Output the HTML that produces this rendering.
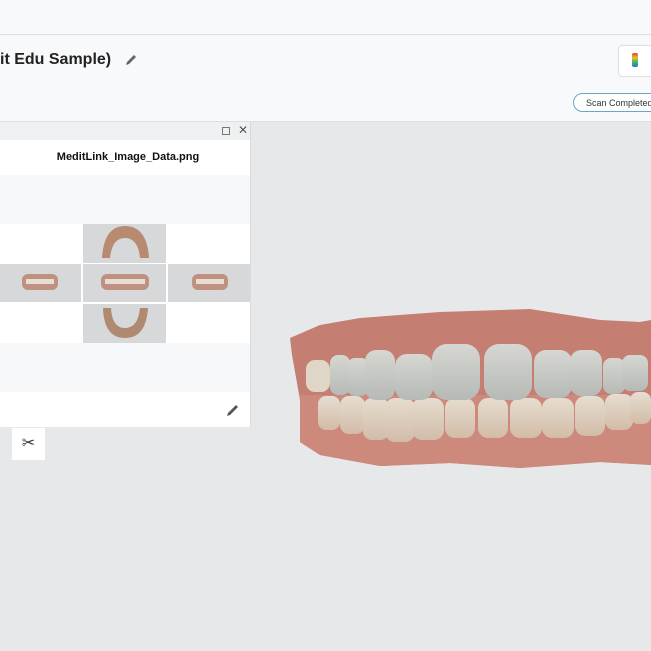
<!DOCTYPE html>
<html><head><style>
body{margin:0;width:651px;height:651px;overflow:hidden;background:#e6e8ea;font-family:"Liberation Sans",sans-serif;position:relative}
.a{position:absolute}
</style></head><body>
<div class="a" style="left:0;top:0;width:651px;height:34px;background:#f8f9fa;border-bottom:1px solid #dcdfe2"></div>
<div class="a" style="left:0;top:35px;width:651px;height:86px;background:#f8f9fa;border-bottom:1px solid #dcdfe2"></div>
<div class="a" style="left:0;top:51px;font-size:16px;font-weight:bold;color:#222">it Edu Sample)</div>
<svg class="a" style="left:124px;top:53px" width="14" height="14" viewBox="0 0 14 14"><path d="M2 12 L3 9 L10 2 L12 4 L5 11 Z" fill="#666"/></svg>
<div class="a" style="left:618px;top:45px;width:40px;height:30px;background:#fff;border:1px solid #dde0e3;border-radius:4px"></div>
<div class="a" style="left:632px;top:53px;width:6px;height:14px;border-radius:2px;background:linear-gradient(#e04040,#f0c020 35%,#40c060 60%,#3070d0)"></div>
<div class="a" style="left:573px;top:93px;width:90px;height:19px;border:1px solid #6aa6c8;border-radius:10px;background:#fff;font-size:9px;line-height:19px;color:#333;padding-left:12px;box-sizing:border-box">Scan Completed</div>
<div class="a" style="left:0;top:122px;width:250px;height:305px;background:#f6f8f9;border-right:1px solid #d8dbde"></div>
<div class="a" style="left:0;top:122px;width:250px;height:18px;background:#eef0f2"></div>
<div class="a" style="left:222px;top:127px;width:8px;height:8px;border:1px solid #777;box-sizing:border-box"></div>
<div class="a" style="left:238px;top:123px;font-size:12px;color:#555">✕</div>
<div class="a" style="left:0;top:140px;width:250px;height:35px;background:#fff;font-size:11px;font-weight:bold;text-align:center;line-height:34px;color:#111;padding-left:6px;box-sizing:border-box">MeditLink_Image_Data.png</div>
<div class="a" style="left:0;top:224px;width:250px;height:119px;background:#fff"></div>
<div class="a" style="left:83px;top:224px;width:83px;height:39px;background:#d6d8da"></div>
<div class="a" style="left:0;top:264px;width:81px;height:38px;background:#d6d8da"></div>
<div class="a" style="left:83px;top:264px;width:83px;height:38px;background:#d6d8da"></div>
<div class="a" style="left:168px;top:264px;width:82px;height:38px;background:#d6d8da"></div>
<div class="a" style="left:83px;top:304px;width:83px;height:39px;background:#d6d8da"></div>
<svg class="a" style="left:0;top:224px" width="250" height="119">
<path d="M102 34 Q104 2 125 2 Q147 2 149 34 L140 34 Q138 14 125 14 Q112 14 110 34Z" fill="#b88a70"/>
<rect x="22" y="50" width="36" height="16" rx="6" fill="#c09080"/><rect x="26" y="55" width="28" height="5" fill="#e6ded2"/>
<rect x="101" y="50" width="48" height="16" rx="6" fill="#c09080"/><rect x="105" y="55" width="40" height="5" fill="#e6ded2"/>
<rect x="192" y="50" width="36" height="16" rx="6" fill="#c09080"/><rect x="196" y="55" width="28" height="5" fill="#e6ded2"/>
<path d="M103 84 Q104 114 125 114 Q146 114 148 84 L140 84 Q138 104 125 104 Q112 104 111 84Z" fill="#b08a70"/>
</svg>
<div class="a" style="left:0;top:392px;width:250px;height:35px;background:#fff"></div>
<svg class="a" style="left:226px;top:403px" width="14" height="14" viewBox="0 0 14 14"><path d="M1 13 L2 10 L10 2 L12 4 L4 12 Z" fill="#555"/></svg>
<div class="a" style="left:12px;top:428px;width:33px;height:32px;background:#fff;font-size:16px;line-height:32px;text-align:center;color:#333">✂</div>
<svg class="a" style="left:0;top:0" width="651" height="651">
<defs><linearGradient id="t" x1="0" y1="0" x2="0" y2="1"><stop offset="0" stop-color="#d6d7d2"/><stop offset="1" stop-color="#b6b9b5"/></linearGradient>
<linearGradient id="l" x1="0" y1="0" x2="0" y2="1"><stop offset="0" stop-color="#e6ddd0"/><stop offset="1" stop-color="#d2bca8"/></linearGradient></defs>
<path d="M290 338 L320 325 L360 318 L440 312 L530 309 L600 320 L640 322 L651 320 L651 465 L600 462 L520 468 L450 463 L380 466 L320 455 L300 442 L300 400 L292 355Z" fill="#c47e72"/>
<path d="M300 395 L651 395 L651 465 L600 462 L520 468 L450 463 L380 466 L320 455 L300 442Z" fill="#cc897c"/>
<g fill="url(#l)">
<rect x="318" y="396" width="22" height="34" rx="8"/><rect x="340" y="396" width="25" height="38" rx="9"/><rect x="363" y="398" width="26" height="42" rx="9"/>
<rect x="385" y="398" width="30" height="44" rx="10"/><rect x="412" y="398" width="32" height="42" rx="10"/><rect x="445" y="398" width="30" height="40" rx="10"/>
<rect x="478" y="398" width="30" height="40" rx="10"/><rect x="510" y="398" width="32" height="40" rx="10"/><rect x="542" y="398" width="32" height="40" rx="10"/>
<rect x="575" y="396" width="30" height="40" rx="10"/><rect x="605" y="394" width="28" height="36" rx="9"/><rect x="630" y="392" width="21" height="32" rx="8"/>
</g>
<g fill="url(#t)">
<rect x="306" y="360" width="24" height="32" rx="9" fill="#e0d6c8"/><rect x="330" y="355" width="20" height="40" rx="8"/><rect x="347" y="358" width="22" height="38" rx="8"/>
<rect x="365" y="350" width="30" height="50" rx="11"/><rect x="395" y="354" width="38" height="46" rx="12"/><rect x="432" y="344" width="48" height="56" rx="15"/>
<rect x="484" y="344" width="48" height="56" rx="15"/><rect x="534" y="350" width="38" height="48" rx="12"/><rect x="570" y="350" width="32" height="46" rx="11"/>
<rect x="603" y="358" width="22" height="36" rx="8"/><rect x="622" y="355" width="26" height="36" rx="8"/>
</g>
</svg>
</body></html>
